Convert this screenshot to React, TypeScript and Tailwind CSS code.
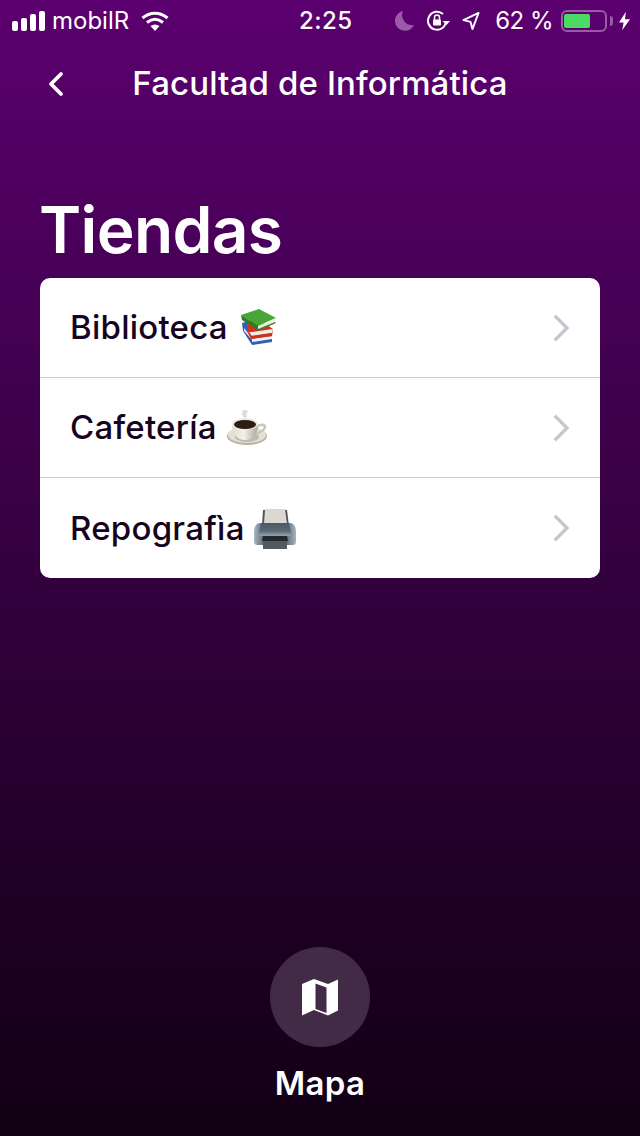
import React from 'react';

const font = "font-['Inter','Noto_Sans',sans-serif]";

const Books = () => (
  <svg width="36" height="37" viewBox="6 6 36 37">
    <path d="M7 20l7-2 23 14 0 7-20 3-9-14z" fill="#2f5fb8" />
    <path d="M9 28l9 10 19-3v-3l-20 3-8-10z" fill="#e6e9f0" />
    <path d="M17 37l20-3v2l-20 3z" fill="#f2f2f4" />
    <path d="M12 19l10-4 16 11-1 7-21 3-3-6z" fill="#d9301e" />
    <path d="M14 29l3 4 20-3 1-4-21 3z" fill="#f0ecea" />
    <path d="M16 33l21-3v3l-21 3z" fill="#c9301f" />
    <path d="M6 12l18-6 17 9-18 8z" fill="#48a636" />
    <path d="M6 12l17 11v4L7 17z" fill="#2c7d26" />
    <path d="M23 23l18-8-1 4-17 8z" fill="#edf0e6" />
    <path d="M23 26l17-7 1 1-18 8z" fill="#35852a" />
  </svg>
);

const Coffee = () => (
  <svg width="41" height="37" viewBox="5 6 41 37">
    <defs>
      <linearGradient id="cup" x1="0" x2="1" y1="0" y2="0">
        <stop offset="0" stopColor="#dedbd2" />
        <stop offset="0.45" stopColor="#f4f2ec" />
        <stop offset="1" stopColor="#a9a597" />
      </linearGradient>
    </defs>
    <path d="M22 7c4 0 5 2 3 3s1 2 0 4c-1 1-3 1-4 0 1-2-3-2-1-4s-1-3 2-3z" fill="#dcdcdc" />
    <ellipse cx="25" cy="33" rx="20" ry="9" fill="#b4b2a5" />
    <ellipse cx="25" cy="32" rx="19" ry="8" fill="#e2e0d7" />
    <ellipse cx="25" cy="34" rx="12" ry="5" fill="#bdbaae" />
    <path d="M34 24c4-3 9-3 9 0s-4 5-9 7" stroke="#c9c6bb" strokeWidth="2.500" fill="none" />
    <path d="M10 21c0 10 5 16 13 16s13-6 13-16z" fill="url(#cup)" />
    <ellipse cx="23" cy="21" rx="13" ry="6" fill="#ecebe4" />
    <ellipse cx="23" cy="21.500" rx="11" ry="4.500" fill="#2f1c12" />
  </svg>
);

const Printer = () => (
  <svg width="43" height="41" viewBox="4 5 43 41">
    <defs>
      <linearGradient id="body" x1="0" x2="0" y1="0" y2="1">
        <stop offset="0" stopColor="#4a5865" />
        <stop offset="0.6" stopColor="#596875" />
        <stop offset="1" stopColor="#98a3ab" />
      </linearGradient>
      <linearGradient id="side" x1="0" x2="1" y1="0" y2="0">
        <stop offset="0" stopColor="#a9b5be" />
        <stop offset="0.2" stopColor="#667684" />
        <stop offset="0.8" stopColor="#667684" />
        <stop offset="1" stopColor="#a9b5be" />
      </linearGradient>
    </defs>
    <path d="M13 7h24l2 16H12z" fill="#47525c" />
    <path d="M15 6h20l2 15H14z" fill="#dcd8cf" />
    <path d="M10 20h30c4 0 6 4 6 9v9c0 3-1 4-4 4H8c-3 0-4-1-4-4v-9c0-5 2-9 6-9z" fill="url(#side)" />
    <path d="M11 20h28l3 13H8z" fill="url(#body)" />
    <path d="M13 33h24v13H13z" fill="#4f5a62" />
    <path d="M13 33h24l1 5H12z" fill="#23282d" />
  </svg>
);

const Chevron = () => (
  <svg width="18" height="28" viewBox="0 0 18 28" fill="none" stroke="#c7c7d0" strokeWidth="3.400" strokeLinecap="square">
    <path d="M3 3l11 11L3 25" />
  </svg>
);

const rows = [
  { name: 'Biblioteca', icon: <Books />, gap: 'gap-[13px]' },
  { name: 'Cafetería', icon: <Coffee />, gap: 'gap-[10px]' },
  { name: 'Repografìa', icon: <Printer />, gap: 'gap-[9px]' },
];

const StatusBar = () => (
  <div className="flex h-10 items-center pl-3 pr-[10px] pt-[2px] text-white">
    <div className="flex w-[287px] items-center">
      <div className="flex items-end gap-[3px]">
        <span className="h-[10px] w-[6px] rounded-[2px] bg-white" />
        <span className="h-[13px] w-[6px] rounded-[2px] bg-white" />
        <span className="h-[17px] w-[6px] rounded-[2px] bg-white" />
        <span className="h-[20px] w-[6px] rounded-[2px] bg-white" />
      </div>
      <span className="ml-[7px] text-[24px] leading-none">mobilR</span>
      <svg className="ml-[12px]" width="28" height="20" viewBox="0 0 28 20" fill="none" stroke="#fff" strokeWidth="3">
        <path d="M1.500 7C9 .5 19 .5 26.500 7" />
        <path d="M6 11.500c5-4 11-4 16 0" />
        <path d="M14 20l-4.500-5c3-2 6-2 9 0z" fill="#fff" stroke="none" />
      </svg>
    </div>
    <span className="text-[24px] font-medium leading-none tracking-[0.5px]">2:25</span>
    <div className="ml-auto flex items-center">
      <svg width="19" height="20" viewBox="0 0 19 20">
        <path d="M8 0a10 10 0 1 0 11 14A10 10 0 0 1 8 0z" fill="#9a5aa8" />
      </svg>
      <svg className="ml-[12px]" width="24" height="22" viewBox="0 0 24 22" fill="none" stroke="#fff" strokeWidth="2">
        <path d="M20 11a9 9 0 1 1-3-7" />
        <path d="M16.500 11l4 4 3.500-4z" fill="#fff" stroke="none" />
        <rect x="7" y="9.500" width="8" height="6" rx="1" fill="#fff" stroke="none" />
        <path d="M8.500 10V7.500a2.500 2.500 0 0 1 5 0V10" strokeWidth="1.500" />
      </svg>
      <svg className="ml-[12px]" width="18" height="20" viewBox="0 0 19 20" fill="none" stroke="#fff" strokeWidth="2" strokeLinejoin="round">
        <path d="M17.500 1.500L1.500 9l7.500 2 2 7.500z" />
      </svg>
      <span className="ml-[15px] text-[24px] leading-none tracking-[-0.5px]">62 %</span>
      <div className="ml-[8px] flex h-[22px] w-[46px] items-center rounded-[6px] border-2 border-[#9a5aa8] p-[1px]">
        <div className="h-[14px] w-[26px] rounded-[2px] bg-[#4cd964]" />
      </div>
      <span className="ml-[3px] h-[10px] w-[3px] rounded-r-[3px] bg-[#9a5aa8]" />
      <svg className="ml-[6px]" width="11" height="20" viewBox="0 0 12 20">
        <path d="M7.500 0L0 11.500h5L3.500 20 12 8H6.500z" fill="#fff" />
      </svg>
    </div>
  </div>
);

const App: React.FC = () => {
  return (
    <div className={`${font} flex h-[1136px] w-[640px] flex-col overflow-hidden bg-gradient-to-b from-[#5c0070] to-[#110014]`}>
      <StatusBar />

      <div className="relative flex h-[87px] items-center justify-center">
        <svg className="absolute left-[47px] top-[31px]" width="18" height="26" viewBox="0 0 18 26" fill="none" stroke="#fff" strokeWidth="3.800" strokeLinecap="round" strokeLinejoin="round">
          <path d="M14 3L4 13l10 10" />
        </svg>
        <h1 className="text-[33px] font-medium leading-none tracking-[0.13px] text-white">Facultad de Informática</h1>
      </div>

      <h2 className="mt-[59px] pl-[39px] text-[64px] font-semibold leading-[88px] tracking-[-0.65px] text-white">Tiendas</h2>

      <ul className="mx-10 mt-[4px] rounded-[10px] bg-white">
        {rows.map((row, i) => (
          <li
            key={row.name}
            className={`flex h-[100px] items-center justify-between pl-[30px] pr-[29px] ${i < rows.length - 1 ? 'border-b border-[#cfcdd6]' : ''}`}
          >
            <div className={`flex items-center ${row.gap}`}>
              <span className="text-[33px] font-medium leading-none tracking-[0.25px] text-[#160320]">{row.name}</span>
              {row.icon}
            </div>
            <Chevron />
          </li>
        ))}
      </ul>

      <div className="mt-auto flex flex-col items-center pb-[33px]">
        <button className="flex h-[100px] w-[100px] items-center justify-center rounded-full bg-[#412b47]">
          <svg width="36" height="37" viewBox="0 0 36 37">
            <path d="M0 5L12 0l14 5 10-4.500v31L26 36.500 12 31 0 36.500zM13.500 4.500V30l11 4V8.500z" fill="#fff" fillRule="evenodd" />
          </svg>
        </button>
        <span className="mt-[16px] text-[33px] font-semibold leading-[40px] tracking-[0.3px] text-white">Mapa</span>
      </div>
    </div>
  );
};

export default App;
